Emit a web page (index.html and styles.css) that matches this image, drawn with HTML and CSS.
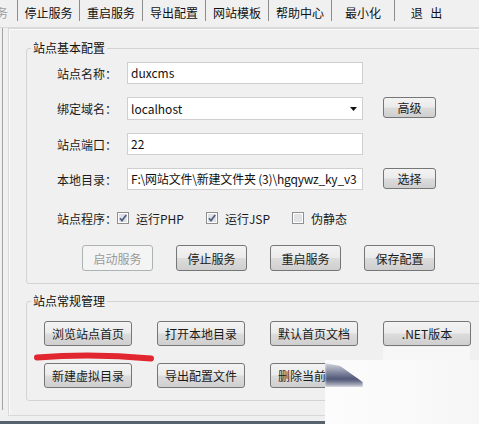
FILE: index.html
```html
<!DOCTYPE html>
<html lang="zh">
<head>
<meta charset="utf-8">
<title>站点配置</title>
<link rel="stylesheet" href="styles.css">
</head>
<body>
<div class="toolbar">
  <div class="tb tb-first"><span>务</span></div>
  <div class="tb tb-w62">停止服务</div>
  <div class="tb">重启服务</div>
  <div class="tb">导出配置</div>
  <div class="tb">网站模板</div>
  <div class="tb">帮助中心</div>
  <div class="tb">最小化</div>
  <div class="tb tb-last">退 出</div>
</div>
<div class="main">
  <div class="edge"></div>
  <div class="panel">
    <fieldset class="group g1">
      <legend>站点基本配置</legend>
      <div class="form">
        <label class="lbl">站点名称：</label>
        <div class="field">duxcms</div>
        <div></div>
        <label class="lbl">绑定域名：</label>
        <div class="field select"><span>localhost</span><svg class="arrow" width="7" height="4" viewBox="0 0 7 4"><path d="M0 0H7L3.5 4Z" fill="#111"/></svg></div>
        <button class="btn btn-sm">高级</button>
        <label class="lbl">站点端口：</label>
        <div class="field">22</div>
        <div></div>
        <label class="lbl">本地目录：</label>
        <div class="field path">F:\网站文件\新建文件夹 (3)\hgqywz_ky_v3</div>
        <button class="btn btn-sm">选择</button>
      </div>
      <div class="checks">
        <span class="lbl">站点程序：</span>
        <span class="chk on"><svg width="12" height="12" viewBox="0 0 12 12"><rect x="0.5" y="0.5" width="11" height="11" fill="#fff" stroke="#8f8f8f"/><rect x="2" y="2" width="8" height="8" fill="#dfe1e4"/><path d="M3 6.2 L5 8.6 L9.2 3" fill="none" stroke="#4d5e85" stroke-width="1.7"/></svg>运行PHP</span>
        <span class="chk on"><svg width="12" height="12" viewBox="0 0 12 12"><rect x="0.5" y="0.5" width="11" height="11" fill="#fff" stroke="#8f8f8f"/><rect x="2" y="2" width="8" height="8" fill="#dfe1e4"/><path d="M3 6.2 L5 8.6 L9.2 3" fill="none" stroke="#4d5e85" stroke-width="1.7"/></svg>运行JSP</span>
        <span class="chk"><svg width="12" height="12" viewBox="0 0 12 12"><rect x="0.5" y="0.5" width="11" height="11" fill="#fff" stroke="#8f8f8f"/><rect x="2" y="2" width="8" height="8" fill="#e1e3e6"/></svg>伪静态</span>
      </div>
      <div class="actions">
        <button class="btn btn-md" disabled>启动服务</button>
        <button class="btn btn-md">停止服务</button>
        <button class="btn btn-md">重启服务</button>
        <button class="btn btn-md">保存配置</button>
      </div>
    </fieldset>
    <fieldset class="group g2">
      <legend>站点常规管理</legend>
      <div class="grid2">
        <button class="btn btn-lg">浏览站点首页</button>
        <button class="btn btn-lg">打开本地目录</button>
        <button class="btn btn-lg">默认首页文档</button>
        <button class="btn btn-lg">.NET版本</button>
        <button class="btn btn-lg">新建虚拟目录</button>
        <button class="btn btn-lg">导出配置文件</button>
        <button class="btn btn-lg">删除当前站点</button>
        <button class="btn btn-lg">站点列表</button>
      </div>
    </fieldset>
  </div>
</div>
<div class="bottom-line"></div>

<svg class="redmark" width="130" height="16" viewBox="0 0 130 16"><path d="M5 8.5 Q 60 4 119 9.5" fill="none" stroke="#e2262f" stroke-width="6" stroke-linecap="round"/></svg>
<div class="fade"></div>
<div class="wm"></div>
<div class="smudge"></div>
</body>
</html>
```
FILE: styles.css
```css
body {
  margin: 0;
  width: 479px;
  height: 424px;
  overflow: hidden;
  position: relative;
  background: #f0f0f0;
  font-family: "Noto Sans CJK SC", "Microsoft YaHei", sans-serif;
  font-size: 12px;
  color: #1b1b1b;
}

.toolbar {
  display: flex;
  height: 28px;
  box-sizing: border-box;
  border-bottom: 1px solid #d9d9d9;
}
.tb {
  flex: none;
  width: 63px;
  height: 21px;
  box-sizing: border-box;
  border-right: 1px solid #8c8c8c;
  padding-top: 4px;
  line-height: 17px;
  display: flex;
  justify-content: center;
  white-space: nowrap;
  color: #111;
}
.tb-first {
  width: 18px;
  justify-content: flex-end;
  padding-right: 9px;
  overflow: hidden;
  color: #a0a0a0;
}
.tb-first span { flex: none; }
.tb-w62 { width: 62px; }
.tb-last { border-right: none; word-spacing: 5px; }

.main {
  display: flex;
  align-items: flex-start;
  height: 393px;
}
.edge {
  flex: none;
  width: 2px;
  height: 382px;
  border-right: 1px solid #a3a3a3;
}
.panel {
  flex: none;
  margin-left: 5px;
  width: 520px;
  box-sizing: border-box;
  border: 1px solid #d8d8d8;
  box-shadow: inset 1px 1px 0 #fbfbfb;
  padding: 11px 0 14px 17px;
}

.group {
  margin: 0;
  padding: 0;
  min-width: 0;
  width: 480px;
  box-sizing: border-box;
  border: 1px solid #d3d3d3;
  border-radius: 3px;
}
.group legend {
  margin-left: 4px;
  padding: 0 2px;
  line-height: 16px;
  font-size: 12px;
  color: #111;
}
.g1 { padding-bottom: 12px; }
.g2 { margin-top: 9px; padding-bottom: 12px; }

.form {
  display: grid;
  grid-template-columns: 60px 236px 53px;
  grid-template-rows: 22px 23px 22px 22px;
  column-gap: 10px;
  row-gap: 13px;
  padding: 6px 0 0 30px;
}
.lbl {
  align-self: center;
  line-height: 17px;
  white-space: nowrap;
  color: #1b1b1b;
}
.field {
  box-sizing: border-box;
  background: #fff;
  border: 1px solid #cfcfcf;
  padding: 0 2px 0 3px;
  line-height: 20px;
  white-space: nowrap;
  overflow: hidden;
  color: #111;
}
.path { letter-spacing: -0.2px; }
.select {
  display: flex;
  align-items: center;
}
.arrow {
  margin-left: auto;
  margin-right: 3px;
  flex: none;
}

.btn {
  box-sizing: border-box;
  border: 1px solid #767676;
  border-radius: 3px;
  background: linear-gradient(#f3f3f3 0%, #ebebeb 48%, #dcdcdc 52%, #cfcfcf 100%);
  font-family: inherit;
  font-size: 12px;
  color: #1b1b1b;
  padding: 0;
  display: flex;
  align-items: center;
  justify-content: center;
  white-space: nowrap;
  overflow: hidden;
}
.btn:disabled {
  border-color: #adb2b5;
  background: #f4f4f4;
  color: #9a9a9a;
}
.btn-sm {
  width: 53px;
  height: 21px;
  align-self: start;
  margin-left: 10px;
}
.btn-md { width: 71px; height: 26px; }
.btn-lg { width: 88px; height: 25px; }

.checks {
  display: flex;
  align-items: center;
  height: 20px;
  margin-top: 18px;
  padding-left: 30px;
}
.checks .lbl { width: 60px; }
.chk {
  display: flex;
  align-items: center;
  line-height: 17px;
  color: #1b1b1b;
}
.chk svg { margin-right: 7px; flex: none; }
.checks .chk:first-of-type { margin-left: 7px; }
.chk + .chk { margin-left: 22px; }

.actions {
  display: flex;
  gap: 23px;
  margin-top: 17px;
  padding-left: 55px;
}

.grid2 {
  display: grid;
  grid-template-columns: repeat(4, 88px);
  column-gap: 25px;
  row-gap: 17px;
  margin-top: 12px;
  padding-left: 17px;
}

.bottom-line {
  height: 3px;
  background: #56626d;
}

.redmark {
  position: absolute;
  left: 32px;
  top: 349px;
}
.fade {
  position: absolute;
  left: 383px;
  top: 347px;
  width: 87px;
  height: 40px;
  background: rgba(255, 255, 255, 0.45);
}
.wm {
  position: absolute;
  left: 325px;
  top: 360px;
  width: 154px;
  height: 64px;
  background: linear-gradient(90deg, #fcfcfc, #f9f9f9 60%, #f6f6f6);
}
.smudge {
  position: absolute;
  left: 325px;
  top: 363px;
  width: 38px;
  height: 24px;
  background: linear-gradient(180deg, rgba(95, 100, 130, 0.25) 0%, rgba(80, 88, 122, 0.7) 40%, rgba(66, 74, 108, 0.95) 68%, rgba(90, 96, 128, 0.3) 100%);
  clip-path: polygon(0 0, 40% 12%, 100% 80%, 100% 100%, 0 100%);
  filter: blur(1.2px);
}
```
